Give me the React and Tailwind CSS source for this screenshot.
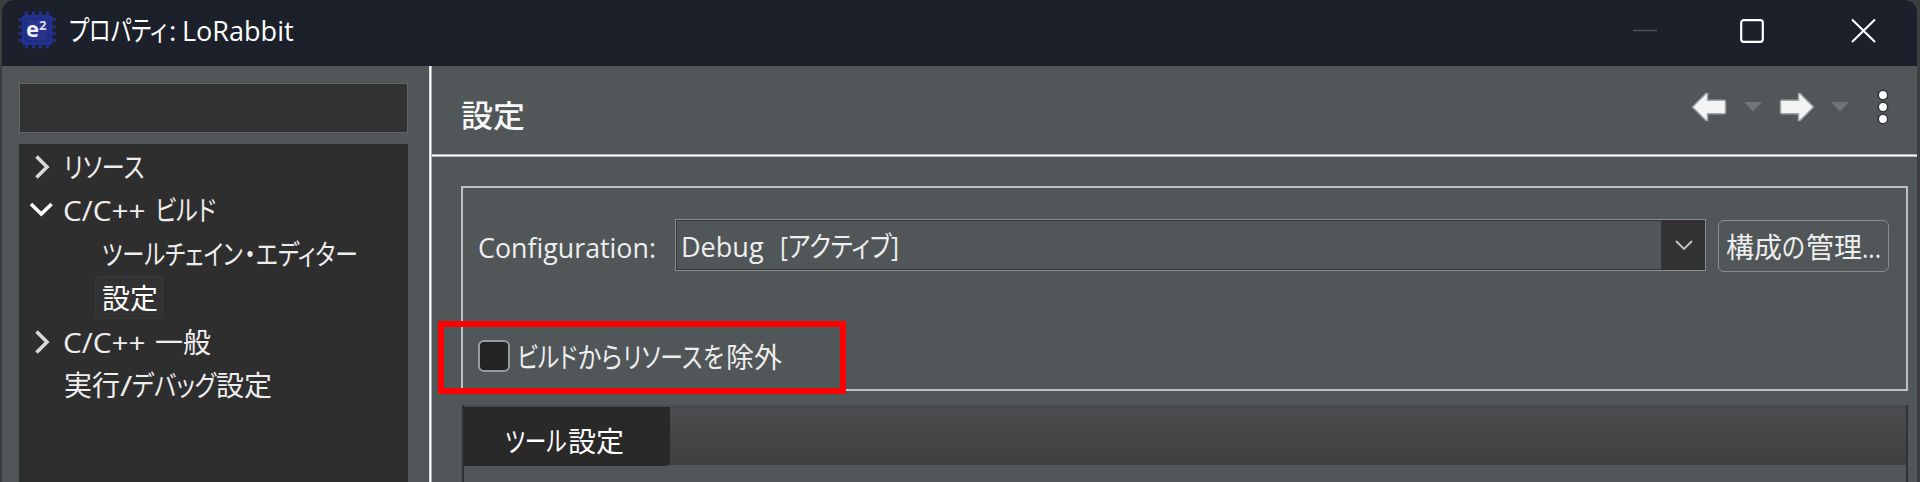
import { useLayoutEffect, useRef } from "react";

// One run of text, condensed or widened horizontally to fill its box.
function Run({ className, children }) {
  const box = useRef(null);
  const text = useRef(null);
  useLayoutEffect(() => {
    const natural = text.current.offsetWidth;
    if (natural) text.current.style.transform = `scaleX(${box.current.clientWidth / natural})`;
  }, []);
  return (
    <span ref={box} className={`block shrink-0 ${className}`}>
      <span ref={text} className="inline-block origin-left whitespace-pre [font-feature-settings:'palt']">
        {children}
      </span>
    </span>
  );
}

function Chevron({ open = false }) {
  return open ? (
    <svg className="ml-[10px] h-6 w-6 shrink-0" viewBox="0 0 24 24" fill="none" stroke="#fff" strokeWidth="3.6">
      <path d="M2 6 12.300 16 22.600 6" />
    </svg>
  ) : (
    <svg className="ml-[10px] h-6 w-6 shrink-0" viewBox="0 0 24 24" fill="none" stroke="#d8d8d8" strokeWidth="3.6">
      <path d="M7.500 1.500 18 12 7.500 22.500" />
    </svg>
  );
}

function ChipLogo() {
  const pins = [8, 15, 22, 29];
  return (
    <svg className="h-[38px] w-[38px] shrink-0" viewBox="0 0 38 38">
      <g stroke="#232f86" strokeWidth="3">
        {pins.map((p) => (
          <path key={p} d={`M${p + 0.5} 0.5V37.5M0.5 ${p + 0.5}H37.5`} />
        ))}
      </g>
      <rect x="4" y="4" width="30" height="30" rx="2" fill="#22318f" />
      <rect x="8" y="8" width="22" height="22" fill="#27348c" stroke="#1c2775" />
      <text x="8" y="26" fill="#eef" fontFamily="Open Sans, sans-serif" fontWeight="700" fontSize="22">e</text>
      <text x="21" y="19" fill="#dde" fontFamily="Open Sans, sans-serif" fontWeight="700" fontSize="13">2</text>
    </svg>
  );
}

function Arrow({ className = "" }) {
  return (
    <svg className={`h-[30px] w-[36px] shrink-0 ${className}`} viewBox="0 0 36 30">
      <path d="M1.5 15 15 1.5h1.5v6.800H33q1.5 0 1.5 1.5v10.400q0 1.5-1.5 1.5H16.500v6.800H15Z" fill="#f4f4f4" stroke="#a2a4a5" strokeWidth="1.5" />
    </svg>
  );
}

function Caret() {
  return (
    <svg className="h-[10px] w-[18px] shrink-0" viewBox="0 0 18 10">
      <path d="M0 0H18L9 9.500Z" fill="#727477" />
    </svg>
  );
}

function TitleBar() {
  return (
    <header className="flex h-[66px] shrink-0 items-start bg-[#1b202b] pl-[16px] text-white">
      <div className="mt-[11px] flex">
        <ChipLogo />
      </div>
      <div className="mt-[11px] flex">
        <Run className="ml-[13px] w-[98px]">プロパティ</Run>
        <Run className="ml-[2px] w-[7px]">:</Run>
        <Run className="ml-[6px] w-[112px]">LoRabbit</Run>
      </div>
      <svg className="mt-[18px] mr-[41px] ml-auto h-[26px] w-[244px]" viewBox="0 0 244 26" fill="none">
        <path d="M1 12.500H25" stroke="#4b4f58" strokeWidth="1.6" />
        <rect x="109.200" y="2.200" width="21.600" height="21.600" rx="2.500" stroke="#fff" strokeWidth="2.200" />
        <path d="M220 1.500 243 24M243 1.500 220 24" stroke="#fff" strokeWidth="2.100" />
      </svg>
    </header>
  );
}

function Sidebar() {
  return (
    <aside className="flex w-[427px] shrink-0 flex-col pt-[17px] pl-[17px]">
      <div className="h-[50px] w-[389px] shrink-0 border border-[#646464] bg-[#323232]" />
      <nav className="mt-[11px] flex w-[389px] grow flex-col bg-[#2e2e2e] pt-[1px]">
        <div className="flex h-[43.700px] shrink-0 items-center">
          <Chevron />
          <Run className="ml-[11px] w-[80px]">リソース</Run>
        </div>
        <div className="flex h-[43.700px] shrink-0 items-center pb-[2px]">
          <Chevron open />
          <Run className="ml-[10px] w-[83px]">C/C++</Run>
          <Run className="ml-[9px] w-[61px]">ビルド</Run>
        </div>
        <div className="flex h-[43.700px] shrink-0 items-center pl-[83px]">
          <Run className="w-[141px]">ツールチェイン</Run>
          <Run className="ml-[1px] w-[12px]">・</Run>
          <Run className="w-[102px]">エディター</Run>
        </div>
        <div className="flex h-[43.700px] shrink-0 items-center pl-[76px]">
          <div className="flex h-[43px] w-[68px] items-center rounded-sm border border-[#3a3a3a] bg-[#323232] pl-[6px]">
            <Run className="w-[56px] text-white">設定</Run>
          </div>
        </div>
        <div className="flex h-[43.700px] shrink-0 items-center">
          <Chevron />
          <Run className="ml-[10px] w-[83px]">C/C++</Run>
          <Run className="ml-[9px] w-[56px]">一般</Run>
        </div>
        <div className="flex h-[43.700px] shrink-0 items-center pl-[45px]">
          <Run className="w-[56px]">実行</Run>
          <Run className="w-[12px]">/</Run>
          <Run className="w-[84px]">デバッグ</Run>
          <Run className="w-[56px]">設定</Run>
        </div>
      </nav>
    </aside>
  );
}

function PageHeader() {
  return (
    <div className="flex h-[88px] shrink-0 items-start">
      <Run className="mt-[30px] ml-[29px] w-[64px] text-[31px] font-medium text-[#f8f8f8]">設定</Run>
      <div className="mt-[22px] mr-[28px] ml-auto flex h-[38px] items-center">
        <Arrow />
        <div className="ml-[17px] flex"><Caret /></div>
        <Arrow className="ml-[17px] -scale-x-100" />
        <div className="mr-[28px] ml-[16px] flex"><Caret /></div>
        <svg className="h-[36px] w-[12px] shrink-0" viewBox="0 0 12 36" fill="#fff" stroke="#303234" strokeWidth="1.500">
          <circle cx="6" cy="6" r="4.700" />
          <circle cx="6" cy="18" r="4.700" />
          <circle cx="6" cy="30" r="4.700" />
        </svg>
      </div>
    </div>
  );
}

function ConfigurationGroup() {
  return (
    <section className="relative mt-[29px] mr-[9px] ml-[29px] h-[205px] shrink-0 border-2 border-[#bfc1c1]">
      <div className="flex pt-[31px] pl-[15px]">
        <Run className="mt-[9px] w-[178px]">Configuration:</Run>
        <div className="ml-[19px] flex h-[52px] w-[1031px] shrink-0 border border-[#8b8d8d]">
          <div className="flex grow border border-[#343638] pl-[4px]">
            <Run className="mt-[6px] w-[83px]">Debug</Run>
            <Run className="mt-[6px] ml-[16px] w-[119px]">[アクティブ]</Run>
          </div>
          <div className="flex w-[43px] items-center justify-center bg-[#323232]">
            <svg className="h-[12px] w-[18px]" viewBox="0 0 18 12" fill="none" stroke="#c4c4c4" strokeWidth="1.800">
              <path d="M1 2 9 10 17 2" />
            </svg>
          </div>
        </div>
        <button className="mt-[1px] ml-[12px] flex h-[52px] w-[171px] shrink-0 items-center rounded-md border border-[#8b8d8d] pt-[2px] pl-[7px]">
          <Run className="w-[56px]">構成</Run>
          <Run className="w-[23px]">の</Run>
          <Run className="ml-[1px] w-[56px]">管理</Run>
          <Run className="w-[19px]">...</Run>
        </button>
      </div>
      <label className="mt-[59px] flex h-[52px] items-center pl-[15px]">
        <span className="mb-[2px] block h-[32px] w-[32px] rounded-md border-2 border-[#9b9d9d] bg-[#242424]" />
        <Run className="ml-[7px] w-[60px]">ビルド</Run>
        <Run className="ml-[1px] w-[44px]">から</Run>
        <Run className="ml-[1px] w-[79px]">リソース</Run>
        <Run className="ml-[1px] w-[21px]">を</Run>
        <Run className="ml-[2px] w-[56px]">除外</Run>
      </label>
      <div className="absolute top-[133px] -left-[25px] h-[73px] w-[408px] border-6 border-[#ff0000]" />
    </section>
  );
}

function SettingsTabs() {
  return (
    <section className="mt-[14px] mr-[9px] ml-[30px] flex grow flex-col border-x-2 border-[#303133]">
      <div className="flex h-[60px] shrink-0 items-start bg-linear-to-b from-[#4a4b4e] from-10% via-[#464648] to-[#404042] pt-[2px]">
        <div className="flex h-[59px] w-[206px] shrink-0 items-center rounded-br-sm bg-[#292929] pl-[41px] text-white">
          <Run className="mt-[8px] w-[62px]">ツール</Run>
          <Run className="mt-[8px] ml-[1px] w-[56px]">設定</Run>
        </div>
      </div>
    </section>
  );
}

export default function App() {
  return (
    <div className="h-[482px] w-[1920px] overflow-hidden bg-[#3e3e3e] pr-[3px] pl-[2px] font-['Open_Sans','Noto_Sans_CJK_JP',sans-serif] text-[28px] leading-[38px] text-[#eeeeee]">
      <div className="flex h-full flex-col overflow-hidden rounded-t-xl bg-[#515658]">
        <TitleBar />
        <div className="flex grow">
          <Sidebar />
          <div className="w-[3px] shrink-0 border-x border-r-[#a8aaab] border-l-[#e0e0e0] bg-white" />
          <main className="flex min-w-0 grow flex-col">
            <PageHeader />
            <div className="h-[3px] shrink-0 border-y border-[#b5b5b8] bg-white" />
            <ConfigurationGroup />
            <SettingsTabs />
          </main>
        </div>
      </div>
    </div>
  );
}
